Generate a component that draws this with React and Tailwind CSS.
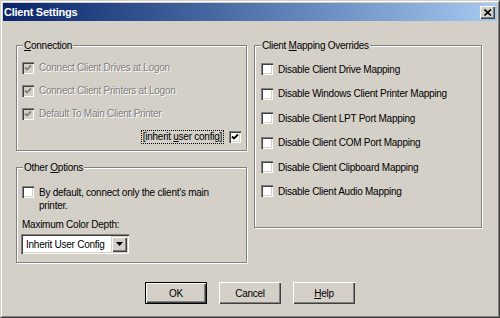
import React from 'react';

function Check({ checked, disabled }) {
  return (
    <span
      className={
        disabled
          ? 'relative block w-[12px] h-[12px] shrink-0 bg-[#d4d0c8] shadow-[inset_1px_1px_0_#808080,inset_2px_2px_0_#404040,inset_-1px_-1px_0_white,inset_-2px_-2px_0_#d4d0c8]'
          : 'relative block w-[12px] h-[12px] shrink-0 bg-white shadow-[inset_1px_1px_0_#808080,inset_2px_2px_0_#404040,inset_-1px_-1px_0_white,inset_-2px_-2px_0_#d4d0c8]'
      }
    >
      {checked && (
        <svg width="12" height="12" viewBox="0 0 12 12" className="absolute inset-0">
          <polyline
            points="3,5.5 5,7.5 9,3.5"
            fill="none"
            stroke={disabled ? '#808080' : '#000'}
            strokeWidth="1.8"
          />
        </svg>
      )}
    </span>
  );
}

function Box({ label, className, children }) {
  return (
    <div
      className={
        'relative border border-[#808080] shadow-[1px_1px_0_white,inset_1px_1px_0_white] ' + className
      }
    >
      <div className="absolute -top-[7px] left-[6px] px-[1px] bg-[#d4d0c8] leading-[13px] whitespace-nowrap">
        {label}
      </div>
      {children}
    </div>
  );
}

function DisabledRow({ text }) {
  return (
    <div className="h-[23px] flex items-center gap-[5px]">
      <Check checked disabled />
      <span className="leading-[13px] text-[#808080] [text-shadow:1px_1px_0_white] whitespace-nowrap">{text}</span>
    </div>
  );
}

function MapRow({ text, h }) {
  return (
    <div className={h + ' flex items-center gap-[5px]'}>
      <Check />
      <span className="leading-[13px] whitespace-nowrap">{text}</span>
    </div>
  );
}

function Button({ children, def }) {
  return (
    <div
      className={
        def
          ? 'w-[62px] h-[22px] flex items-center justify-center border border-black shadow-[inset_1px_1px_0_white,inset_-1px_-1px_0_#404040,inset_-2px_-2px_0_#808080]'
          : 'w-[62px] h-[22px] flex items-center justify-center shadow-[inset_1px_1px_0_white,inset_-1px_-1px_0_#404040,inset_-2px_-2px_0_#808080]'
      }
    >
      <span className="leading-[13px]">{children}</span>
    </div>
  );
}

export default function App() {
  const mapRows = [
    ['Disable Client Drive Mapping', 'h-[24px]'],
    ['Disable Windows Client Printer Mapping', 'h-[25px]'],
    ['Disable Client LPT Port Mapping', 'h-[24px]'],
    ['Disable Client COM Port Mapping', 'h-[25px]'],
    ['Disable Client Clipboard Mapping', 'h-[24px]'],
    ['Disable Client Audio Mapping', 'h-[24px]'],
  ];
  return (
    <div className="w-[500px] h-[318px] font-['Liberation_Sans',Arial,sans-serif] text-[10px] tracking-[-0.25px] text-black">
      <div className="h-full border border-[#d4d0c8] border-r-[#404040] border-b-[#404040]">
        <div className="h-full flex flex-col border border-white border-r-[#808080] border-b-[#808080] bg-[#d4d0c8] p-px">
          {/* Title bar */}
          <div className="h-[18px] shrink-0 flex items-center justify-between bg-gradient-to-r from-[#0a246a] to-[#a6caf0] pl-[1px] pr-[2px]">
            <span className="text-white font-bold text-[11px] leading-[13px]">Client Settings</span>
            <div className="w-[15px] h-[13px] bg-[#d4d0c8] flex items-center justify-center shadow-[inset_1px_1px_0_white,inset_-1px_-1px_0_#404040,inset_-2px_-2px_0_#808080]">
              <svg width="8" height="7" viewBox="0 0 8 7">
                <path d="M0.5 0.5 L7 6.5 M7 0.5 L0.5 6.5" stroke="#000" strokeWidth="1.6" fill="none" />
              </svg>
            </div>
          </div>

          {/* Main content */}
          <div className="flex gap-[7px] pl-[13px] pt-[24px]">
            <div className="flex flex-col">
              <Box
                label={<><span className="underline">C</span>onnection</>}
                className="w-[231px] h-[106px] pt-[10px] pl-[5px] pr-[5px]"
              >
                <DisabledRow text="Connect Client Drives at Logon" />
                <DisabledRow text="Connect Client Printers at Logon" />
                <DisabledRow text="Default To Main Client Printer" />
                <div className="h-[23px] flex items-center justify-end gap-[5px]">
                  <span className="leading-[12px] border border-dotted border-black px-[1px] whitespace-nowrap">
                    [inherit <span className="underline">u</span>ser config]
                  </span>
                  <Check checked />
                </div>
              </Box>
              <Box
                label={<>Other <span className="underline">O</span>ptions</>}
                className="w-[231px] h-[96px] mt-[16px] pt-[18px] px-[5px]"
              >
                <div className="flex items-start gap-[5px]">
                  <Check />
                  <span className="leading-[13px]">
                    By default, connect only the client's main
                    <br />
                    printer.
                  </span>
                </div>
                <div className="leading-[13px] mt-[6px]">Maximum Color Depth:</div>
                <div className="ml-[-1px] mt-[3px] w-[108px] h-[20px] bg-white flex items-center justify-between p-[2px] shadow-[inset_1px_1px_0_#808080,inset_2px_2px_0_#404040,inset_-1px_-1px_0_white,inset_-2px_-2px_0_#d4d0c8]">
                  <span className="pl-[3px] leading-[13px] whitespace-nowrap">Inherit User Config</span>
                  <div className="w-[16px] h-[16px] bg-[#d4d0c8] flex items-center justify-center shadow-[inset_1px_1px_0_#d4d0c8,inset_2px_2px_0_white,inset_-1px_-1px_0_#404040,inset_-2px_-2px_0_#808080]">
                    <svg width="7" height="4" viewBox="0 0 7 4">
                      <path d="M0 0 L7 0 L3.5 4 Z" fill="#000" />
                    </svg>
                  </div>
                </div>
              </Box>
            </div>
            <Box
              label={<>Client <span className="underline">M</span>apping Overrides</>}
              className="w-[228px] h-[183px] pt-[11px] pl-[6px]"
            >
              {mapRows.map(([t, h]) => (
                <MapRow key={t} text={t} h={h} />
              ))}
            </Box>
          </div>

          {/* Buttons */}
          <div className="flex justify-center gap-[12px] mt-[19px]">
            <Button def>OK</Button>
            <Button>Cancel</Button>
            <Button>
              <span className="underline">H</span>elp
            </Button>
          </div>
        </div>
      </div>
    </div>
  );
}
